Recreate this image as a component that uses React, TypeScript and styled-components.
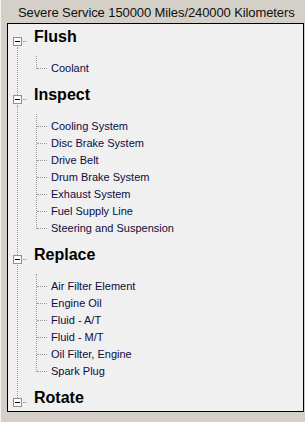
import React from 'react';
import styled, { createGlobalStyle } from 'styled-components';

interface IGroup {
    title: string,
    items: string[]
}

const groups: IGroup[] = [
    { title: 'Flush', items: ['Coolant'] },
    {
        title: 'Inspect',
        items: [
            'Cooling System',
            'Disc Brake System',
            'Drive Belt',
            'Drum Brake System',
            'Exhaust System',
            'Fuel Supply Line',
            'Steering and Suspension',
        ],
    },
    {
        title: 'Replace',
        items: [
            'Air Filter Element',
            'Engine Oil',
            'Fluid - A/T',
            'Fluid - M/T',
            'Oil Filter, Engine',
            'Spark Plug',
        ],
    },
    { title: 'Rotate', items: [] },
];

const GlobalStyle = createGlobalStyle`
    html, body {
        margin: 0;
        padding: 0;
        background: #d4d0c8;
    }
`;

const Frame = styled.div`
    width: 305px;
    height: 422px;
    box-sizing: border-box;
    display: flex;
    flex-direction: column;
    padding: 0 1px 10px 6px;
    border-left: 1px solid #f2f2f2;
    background: #d4d0c8;
    font-family: "Liberation Sans", Arial, sans-serif;
    overflow: hidden;
`;

const Title = styled.div`
    height: 23px;
    box-sizing: border-box;
    padding: 2px 0 0 11px;
    line-height: 21px;
    font-size: 13px;
    letter-spacing: -0.1px;
    color: #111;
    white-space: nowrap;
`;

const Panel = styled.div`
    flex: 1;
    border: 1px solid #000;
    background: #f0f0f0;
    overflow: hidden;
`;

const Tree = styled.div`
    margin-top: -5px;
    display: flex;
    flex-direction: column;
`;

const Group = styled.div<{ $last: boolean }>`
    position: relative;
    &::before {
        content: ${p => (p.$last ? 'none' : "''")};
        position: absolute;
        left: 9px;
        top: 28px;
        bottom: -18px;
        border-left: 1px dotted #9a9a9a;
    }
`;

const HeaderRow = styled.div`
    height: 41px;
    display: flex;
    align-items: flex-start;
    padding-left: 5px;
`;

const Expander = styled.span`
    width: 9px;
    height: 9px;
    box-sizing: border-box;
    margin-top: 18px;
    border: 1px solid #8e8f8f;
    background: #fbfbfb;
    display: flex;
    align-items: center;
    justify-content: center;
    &::after {
        content: '';
        width: 5px;
        height: 1px;
        background: #000;
    }
`;

const Stub = styled.span`
    width: 4px;
    margin: 22px 0 0 1px;
    border-top: 1px dotted #9a9a9a;
`;

const GroupLabel = styled.span`
    margin: 8px 0 0 7px;
    font-size: 16px;
    font-weight: bold;
    line-height: 20px;
    color: #000;
`;

const ChildList = styled.div`
    position: relative;
    &::before {
        content: '';
        position: absolute;
        left: 28px;
        top: -4px;
        bottom: 8px;
        border-left: 1px dotted #9a9a9a;
    }
`;

const ChildRow = styled.div`
    position: relative;
    height: 17px;
    line-height: 17px;
    padding-left: 43px;
    font-size: 11px;
    color: #0c0c40;
    white-space: nowrap;
    &::before {
        content: '';
        position: absolute;
        left: 29px;
        top: 8px;
        width: 10px;
        border-top: 1px dotted #9a9a9a;
    }
`;

const App = () => {
    return (
        <>
            <GlobalStyle />
            <Frame>
                <Title>Severe Service 150000 Miles/240000 Kilometers</Title>
                <Panel>
                    <Tree>
                        {groups.map((g, i) => (
                            <Group key={g.title} $last={i === groups.length - 1}>
                                <HeaderRow>
                                    <Expander />
                                    <Stub />
                                    <GroupLabel>{g.title}</GroupLabel>
                                </HeaderRow>
                                {g.items.length > 0 && (
                                    <ChildList>
                                        {g.items.map(item => (
                                            <ChildRow key={item}>{item}</ChildRow>
                                        ))}
                                    </ChildList>
                                )}
                            </Group>
                        ))}
                    </Tree>
                </Panel>
            </Frame>
        </>
    )
}

export default App;
